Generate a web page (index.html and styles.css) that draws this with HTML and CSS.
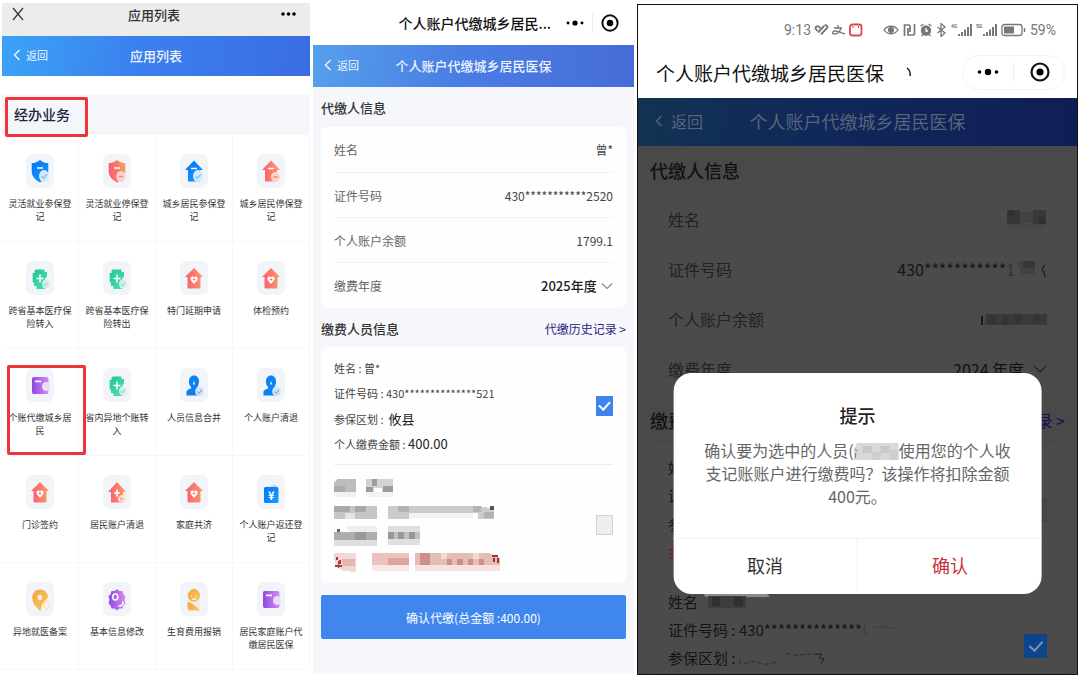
FILE: index.html
```html
<!DOCTYPE html>
<html lang="zh-CN">
<head>
    <meta charset="UTF-8">
    <meta name="viewport" content="width=device-width, initial-scale=1.0">
    <title>个人账户代缴城乡居民医保</title>
    <link rel="stylesheet" href="styles.css">
</head>
<body>

<!-- shared icons -->
<svg class="defs" width="0" height="0" aria-hidden="true">
  <defs>
    <linearGradient id="gBlue" x1="0" y1="0" x2="1" y2="1"><stop offset="0" stop-color="#0a74f5"/><stop offset="1" stop-color="#149bff"/></linearGradient>
    <linearGradient id="gRed" x1="0" y1="0" x2="1" y2="0"><stop offset="0" stop-color="#fa5a72"/><stop offset="1" stop-color="#fd9a66"/></linearGradient>
    <linearGradient id="gGreen" x1="0" y1="0" x2="1" y2="1"><stop offset="0" stop-color="#1fc792"/><stop offset="1" stop-color="#4fe0b0"/></linearGradient>
    <linearGradient id="gPurple" x1="0" y1="0" x2="1" y2="0"><stop offset="0" stop-color="#9048e4"/><stop offset="1" stop-color="#d68cf4"/></linearGradient>
    <linearGradient id="gGold" x1="0" y1="0" x2="1" y2="1"><stop offset="0" stop-color="#f3a83c"/><stop offset="1" stop-color="#f9c468"/></linearGradient>
    <symbol id="badge-ok" viewBox="0 0 28 34"><ellipse cx="18" cy="22" rx="5" ry="6" fill="#d5e9fd"/><path d="M15.500 22l2 2.300 3.300-4" fill="none" stroke="#8cc4fa" stroke-width="1.400"/></symbol>
    <symbol id="shield-ok" viewBox="0 0 28 34"><path d="M14 6c3 2.500 5.500 3 8.300 3v8c0 6-4 9-8.300 11.500C9.700 26 5.700 23 5.700 17V9C8.500 9 11 8.500 14 6z" fill="url(#gBlue)"/><path d="M11 14h6" stroke="#fff" stroke-width="1.600"/><use href="#badge-ok"/></symbol>
    <symbol id="shield-off" viewBox="0 0 28 34"><path d="M14 6c3 2.500 5.500 3 8.300 3v8c0 6-4 9-8.300 11.500C9.700 26 5.700 23 5.700 17V9C8.500 9 11 8.500 14 6z" fill="url(#gRed)"/><path d="M11 14h6" stroke="#fff" stroke-width="1.600"/><ellipse cx="18" cy="22.500" rx="4.600" ry="5.500" fill="#ffd2cb"/><path d="M15.800 22.500h4.400" stroke="#fb8676" stroke-width="1.600"/></symbol>
    <symbol id="house-ok" viewBox="0 0 28 34"><path d="M14 6.500l9 9.500h-3v11.500H8V16H5z" fill="url(#gBlue)"/><path d="M11 14.500h6" stroke="#fff" stroke-width="1.600"/><use href="#badge-ok"/></symbol>
    <symbol id="house-off" viewBox="0 0 28 34"><path d="M14 6.500l9 9.500h-3v11.500H8V16H5z" fill="url(#gRed)"/><path d="M11 14.500h6" stroke="#fff" stroke-width="1.600"/><ellipse cx="18.500" cy="23" rx="4.600" ry="5" fill="#ffd2cb"/><path d="M16.300 23h4.400" stroke="#fb8676" stroke-width="1.400"/></symbol>
    <symbol id="house-heart" viewBox="0 0 28 34"><path d="M14 7l9 9h-2.500v10.500q0 1-1 1h-11q-1 0-1-1V16H5z" fill="url(#gRed)"/><path d="M14 23l-3.500-4.200v-2.300l1.800-1.200L14 16.500l1.700-1.200 1.800 1.200v2.300z" fill="#fff"/><path d="M12.700 18.500h2.600M14 17.200v2.600" stroke="#fb7a6c" stroke-width="1"/></symbol>
    <symbol id="house-plus" viewBox="0 0 28 34"><path d="M14 7l9 10h-3v10.500H8V17H5z" fill="url(#gRed)"/><path d="M11 18h6M14 14.500v7" stroke="#fff" stroke-width="1.700"/><path d="M15 25c0-3 2-5 5-5l3-1-1 7c-1 2-6 2-7-1z" fill="#ffe0d8"/><path d="M19 22l-2 2 2 2M17 24h4" fill="none" stroke="#fb9c88" stroke-width="1"/></symbol>
    <symbol id="cross" viewBox="0 0 28 34"><path d="M10 8.500h8.500v2.500H21v4.500c-2 2-3 4-3 7l1 5.500h-8.500v-3H8v-3.500H6.700V12H8.500V9.500z" fill="url(#gGreen)"/><path d="M10.500 17.500h7M14 13.500v8" stroke="#fff" stroke-width="1.500"/><ellipse cx="19.800" cy="23" rx="3.800" ry="4.500" fill="#d4efe8"/><path d="M17.800 23l1.500 1.800 2.700-3.300" fill="none" stroke="#7ddcbd" stroke-width="1"/></symbol>
    <symbol id="wallet" viewBox="0 0 28 34"><path d="M7.500 9h13q2 0 2 2v4h-2.500a3 3.500 0 0 0 0 7h2.500v2q0 2-2 2h-13q-1.500 0-1.500-2V11q0-2 1.500-2z" fill="url(#gPurple)"/><path d="M9 13.300h6" stroke="#fff" stroke-width="1.700"/><ellipse cx="20" cy="18.500" rx="4" ry="4.500" fill="#eddcf8"/></symbol>
    <symbol id="person" viewBox="0 0 28 34"><path d="M14 7.500c3 0 5 2.500 5 6 0 3-1 5-2.300 6.500-.5 1 0 1.500 1 2.500l2 5H6.500v-3.500c0-2 3-3 4.500-3.500.5-.5.300-1 0-1.500C9.700 17.500 9 16 9 13.500c0-3.500 2-6 5-6z" fill="#0a82f3"/><path d="M14 12.500l-1.200 4h2.400z" fill="#cfe5ff"/><ellipse cx="19.500" cy="23.500" rx="4.300" ry="5" fill="#d5e4f8"/><path d="M17.300 23.500l1.700 2 3-3.600" fill="none" stroke="#6aaaf2" stroke-width="1.100"/></symbol>
    <symbol id="yuan" viewBox="0 0 28 34"><path d="M10 12l8-2.500 2 1V13z" fill="#c4defa"/><rect x="7" y="12" width="14.500" height="16" rx="1.500" fill="url(#gBlue)"/><text x="14.200" y="24.500" font-size="11" font-weight="bold" text-anchor="middle" fill="#fff">¥</text></symbol>
    <symbol id="pin" viewBox="0 0 28 34"><path d="M14 7.500c4.500 0 8 3.500 8 8l-6 7-1.500 6.500C11 26.500 6.200 21 6.200 15.500c0-4.500 3.500-8 7.800-8z" fill="url(#gGold)"/><ellipse cx="13.800" cy="15.500" rx="2.300" ry="2.800" fill="#fdf3e2"/><path d="M20.500 17.500l4.500 5.500-4.500 5.500L16 23z" fill="#fbe6c6"/><path d="M20.500 20.500v5M18.500 23h4" stroke="#fff" stroke-width="1.200"/></symbol>
    <symbol id="gear" viewBox="0 0 28 34"><path d="M14 7l2.500 2h3l1 3.200 2 2-1 3.800 1 3.500-2 2-1 3h-3l-2.500 2-2.500-2h-3l-1-3-2-2 1-3.500-1-3.800 2-2 1-3.200h3z" fill="url(#gPurple)"/><ellipse cx="12.300" cy="15" rx="2.500" ry="3" fill="none" stroke="#fff" stroke-width="1.600"/><path d="M20 19.500q.5 5-4.500 4.500" fill="none" stroke="#fff" stroke-width="1.600"/></symbol>
    <symbol id="baby" viewBox="0 0 28 34"><path d="M14 6.500c3 1 6 3.500 6 7s-2.500 6.500-6 6.500-6.200-3-6.200-6.500 3.200-6 6.200-7z" fill="url(#gGold)"/><path d="M11.500 13.500v1M16 13.500v1M12 16.500q2 1.500 4 0" fill="none" stroke="#fff" stroke-width="1.100"/><path d="M8 19.500l5 2.500 7.500 6.500H8.500c-1.500-3-1.500-6-.5-9z" fill="url(#gGold)"/><path d="M15.500 22.500l4-3.500 1.500 6-1.500 1z" fill="#fbe9cf"/></symbol>
    <symbol id="back" viewBox="0 0 8 12"><path d="M6.500 1L1.500 6l5 5" fill="none" stroke="currentColor" stroke-width="1.400"/></symbol>
    <symbol id="down" viewBox="0 0 12 8"><path d="M1 1.500L6 6.500l5-5" fill="none" stroke="currentColor" stroke-width="1.100"/></symbol>
    <symbol id="dots" viewBox="0 0 22 8"><circle cx="2.500" cy="4" r="1.800"/><circle cx="11" cy="4" r="3.200"/><circle cx="19.500" cy="4" r="1.800"/></symbol>
    <symbol id="target" viewBox="0 0 20 20"><circle cx="10" cy="10" r="8.500" fill="none" stroke="currentColor" stroke-width="2.200"/><circle cx="10" cy="10" r="3.600"/></symbol>
  </defs>
</svg>

<main class="page">

  <!-- application list -->
  <section class="phone apps">
    <div class="topbar">
      <button class="plain" aria-label="关闭"><svg width="12" height="14" viewBox="0 0 12 14"><path d="M1 1l10 12M11 1L1 13" fill="none" stroke="#333" stroke-width="1.200"/></svg></button>
      <h1>应用列表</h1>
      <button class="plain end" aria-label="更多"><svg width="15" height="4" viewBox="0 0 15 4"><circle cx="2" cy="2" r="1.800"/><circle cx="7.500" cy="2" r="1.800"/><circle cx="13" cy="2" r="1.800"/></svg></button>
    </div>
    <div class="navbar">
      <a class="back" href="#"><svg><use href="#back"/></svg>返回</a>
      <h2>应用列表</h2>
    </div>
    <div class="group"><h3 class="marked">经办业务</h3></div>
    <div class="grid">
      <a class="app" href="#"><svg class="tile"><use href="#shield-ok"/></svg><span>灵活就业参保登记</span></a>
      <a class="app" href="#"><svg class="tile"><use href="#shield-off"/></svg><span>灵活就业停保登记</span></a>
      <a class="app" href="#"><svg class="tile"><use href="#house-ok"/></svg><span>城乡居民参保登记</span></a>
      <a class="app" href="#"><svg class="tile"><use href="#house-off"/></svg><span>城乡居民停保登记</span></a>
      <a class="app" href="#"><svg class="tile"><use href="#cross"/></svg><span>跨省基本医疗保险转入</span></a>
      <a class="app" href="#"><svg class="tile"><use href="#cross"/></svg><span>跨省基本医疗保险转出</span></a>
      <a class="app" href="#"><svg class="tile"><use href="#house-heart"/></svg><span>特门延期申请</span></a>
      <a class="app" href="#"><svg class="tile"><use href="#house-heart"/></svg><span>体检预约</span></a>
      <a class="app marked" href="#"><svg class="tile"><use href="#wallet"/></svg><span>个账代缴城乡居民</span></a>
      <a class="app" href="#"><svg class="tile"><use href="#cross"/></svg><span>省内异地个账转入</span></a>
      <a class="app" href="#"><svg class="tile"><use href="#person"/></svg><span>人员信息合并</span></a>
      <a class="app" href="#"><svg class="tile"><use href="#person"/></svg><span>个人账户清退</span></a>
      <a class="app" href="#"><svg class="tile"><use href="#house-heart"/></svg><span>门诊签约</span></a>
      <a class="app" href="#"><svg class="tile"><use href="#house-plus"/></svg><span>居民账户清退</span></a>
      <a class="app" href="#"><svg class="tile"><use href="#house-heart"/></svg><span>家庭共济</span></a>
      <a class="app" href="#"><svg class="tile"><use href="#yuan"/></svg><span>个人账户返还登记</span></a>
      <a class="app" href="#"><svg class="tile"><use href="#pin"/></svg><span>异地就医备案</span></a>
      <a class="app" href="#"><svg class="tile"><use href="#gear"/></svg><span>基本信息修改</span></a>
      <a class="app" href="#"><svg class="tile"><use href="#baby"/></svg><span>生育费用报销</span></a>
      <a class="app" href="#"><svg class="tile"><use href="#wallet"/></svg><span>居民家庭账户代缴居民医保</span></a>
    </div>
  </section>

  <!-- payment form -->
  <section class="phone form">
    <div class="wxbar">
      <h1>个人账户代缴城乡居民...</h1>
      <div class="capsule">
        <button class="plain" aria-label="更多"><svg class="dots"><use href="#dots"/></svg></button>
        <button class="plain" aria-label="关闭"><svg class="target"><use href="#target"/></svg></button>
      </div>
    </div>
    <div class="navbar">
      <a class="back" href="#"><svg><use href="#back"/></svg>返回</a>
      <h2>个人账户代缴城乡居民医保</h2>
    </div>
    <div class="heading"><h3>代缴人信息</h3></div>
    <div class="card info">
      <div class="row"><span>姓名</span><b>曾*</b></div>
      <div class="row"><span>证件号码</span><b>430***********2520</b></div>
      <div class="row"><span>个人账户余额</span><b>1799.1</b></div>
      <div class="row"><label for="year">缴费年度</label>
        <div class="pick"><select id="year"><option>2025年度</option></select><svg><use href="#down"/></svg></div></div>
    </div>
    <div class="heading"><h3>缴费人员信息</h3><a href="#">代缴历史记录 &gt;</a></div>
    <div class="card people">
      <div class="person">
        <label for="p1">
          <span>姓名 : 曾*</span>
          <span>证件号码 : 430**************521</span>
          <span>参保区划 : &nbsp;<b>攸县</b></span>
          <span>个人缴费金额 : <b>400.00</b></span>
        </label>
        <input type="checkbox" id="p1" checked>
      </div>
      <div class="person masked">
        <label for="p2" aria-label="缴费人员">
          <svg width="168" height="94" viewBox="0 0 168 94" shape-rendering="crispEdges">
            <path d="M0 4l4-3h18v13H0z" fill="#bdbdbd"/><path d="M0 8h11v6H0z" fill="#aaa"/><path d="M0 14h22v5H0z" fill="#f1f1f1"/>
            <path d="M32 1h27v13H32z" fill="#d2d2d2"/><path d="M38 1h5v7h-5zM32 9h7v5h-7zM49 8h10v6H49z" fill="#9c9c9c"/><path d="M40 10h8v4h-8z" fill="#fff"/><path d="M32 14h27v5H32z" fill="#f3f3f3"/>
            <path d="M0 28h43v13H0z" fill="#c6c6c6"/><path d="M0 28h16v6H0zM21 28h11v6H21z" fill="#a9a9a9"/><path d="M11 35h10v6H11z" fill="#e4e4e4"/>
            <path d="M54 28h92l14 3v10h-16v-6H75v6H54z" fill="#cbcbcb"/><path d="M64 28h11v6H64zM139 28h8v6h-8zM150 34h10v6h-10z" fill="#b2b2b2"/><path d="M156 28h4v4h-4z" fill="#555"/><path d="M75 35h64v5H75z" fill="#f2f2f2"/>
            <path d="M10 48h33v6H16z" fill="#efefef"/><path d="M0 54h43v8H0z" fill="#adadad"/><path d="M0 62h43v6H0z" fill="#dedede"/><path d="M3 51h3v3H3z" fill="#666"/><path d="M21 54h11v8H21z" fill="#999"/>
            <path d="M54 48h32v19H54z" fill="#dfdfdf"/><path d="M54 54h6v7h-6zM64 54h6v7h-6zM75 54h6v7h-6z" fill="#989898"/><path d="M60 54h4v7h-4zM70 54h5v7h-5zM81 54h5v7h-5z" fill="#c1c1c1"/>
            <path d="M0 75h22v19l-13-1-8-5z" fill="#f2d8d5"/><path d="M8 81h13v7H8z" fill="#e4b7b2"/><path d="M2 79h2v3H2zM5 82h2v4H5zM1 87h7v2H1zM4 83h1v7H4z" fill="#b33a36"/>
            <path d="M38 75h37v12H38z" fill="#ebc2bd"/><path d="M54 80h21v7H54z" fill="#dda39d"/><path d="M38 87h37v6H38z" fill="#f7e7e5"/>
            <path d="M81 75h74l11 5v7H81z" fill="#e6bcb7"/><path d="M81 87h85v6H81z" fill="#f6e3e0"/><path d="M86 75h10v12H86zM113 81h5v6h-5zM123 81h6v6h-6zM134 81h5v6h-5zM145 81h5v6h-5z" fill="#cf8e88"/><path d="M107 75h6v6h-6zM139 75h6v6h-6z" fill="#f1d9d6"/><path d="M158 77h6v2h-6zM159 80h2v4h-2zM163 80h2v5h-2z" fill="#a8302f"/>
          </svg>
        </label>
        <input type="checkbox" id="p2">
      </div>
    </div>
    <button class="submit">确认代缴(总金额 :400.00)</button>
  </section>

  <!-- confirm dialog over the dimmed form -->
  <section class="phone confirm">
    <div class="status">
      <span>9:13</span>
      <svg width="50" height="14" viewBox="0 0 50 14" fill="none" stroke="#777" stroke-width="1.300">
        <path d="M3.500 8L1.500 5.500q0-3 3-2l2 1.500M4 9.500L10 3M7 11.500L13.500 4.500q0-3-3-2" stroke-width="1.900"/>
        <path d="M20 5h8M24 2v3M27 5c-1 4-4 6-7 6-2 0-2-3 1-3 3 0 6 2 10 3"/>
        <rect x="36" y="1.500" width="11.500" height="11" rx="2.500" stroke="#e0464c" stroke-width="1.800"/><path d="M39 3v2M44.500 3v2" stroke="#e0464c" stroke-width="1"/>
      </svg>
      <svg class="signals" width="144" height="14" viewBox="0 0 144 14" fill="none" stroke="#777" stroke-width="1.300">
        <path d="M1 7c3.500-5 10.500-5 14 0-3.500 5-10.500 5-14 0z"/><circle cx="8" cy="7" r="2.400" fill="#777"/>
        <path d="M21.500 13V2h4q1.500 0 1.500 1.500V9M31.500 1v9.500q0 1.500-1.500 1.500h-5V5" stroke-width="1.700"/>
        <circle cx="43" cy="7.500" r="4.500" fill="#777"/><path d="M37.500 3l3-2M48.500 3l-3-2M38.500 13l1.500-1.500M47.500 13l-1.500-1.500"/><path d="M43 5v3h2" stroke="#fff"/>
        <path d="M54.500 4l7.500 6-4 3.500V.5L62 4l-7.500 6"/>
        <text x="68" y="5" font-size="5" font-weight="bold" fill="#777" stroke="none">4G</text>
        <path d="M76 13v-2M79 13V9M82 13V6.500M85 13V4M88 13V1" stroke-width="2"/>
        <text x="93" y="5" font-size="5" font-weight="bold" fill="#777" stroke="none">5G</text>
        <path d="M101 13v-2M104 13V9M107 13V6.500M110 13V4M113 13V1" stroke-width="2"/>
        <rect x="119" y="1.500" width="20" height="11" rx="2.500"/><path d="M121 3.500h10v7h-10z" fill="#777" stroke="none"/><path d="M141.500 5v4" stroke-width="1.500"/>
      </svg>
      <span>59%</span>
    </div>
    <div class="wxbar">
      <h1>个人账户代缴城乡居民医保</h1>
      <svg width="6" height="10" viewBox="0 0 6 10"><path d="M1 1q4 3 3 8" fill="none" stroke="#222" stroke-width="1.500"/></svg>
      <div class="capsule">
        <button class="plain" aria-label="更多"><svg class="dots"><use href="#dots"/></svg></button>
        <button class="plain" aria-label="关闭"><svg class="target"><use href="#target"/></svg></button>
      </div>
    </div>
    <div class="navbar">
      <a class="back" href="#"><svg><use href="#back"/></svg>返回</a>
      <h2>个人账户代缴城乡居民医保</h2>
    </div>
    <div class="heading"><h3>代缴人信息</h3></div>
    <div class="card info">
      <div class="row"><span>姓名</span>
        <svg width="40" height="18" viewBox="0 0 40 18"><path d="M0 0h13v14H0z" fill="#363636"/><path d="M13 2h13v11H13z" fill="#424242"/><path d="M26 0h13v14H26z" fill="#383838"/><path d="M1 0h6v7H1zM32 7h7v7h-7z" fill="#303030"/><path d="M0 14h39v4H0z" fill="#464646"/></svg></div>
      <div class="row"><span>证件号码</span><b>430***********<i>1</i>
        <svg width="32" height="18" viewBox="0 0 32 18"><path d="M2 2h18v12H6z" fill="#424242"/><path d="M8 1h12v7H8z" fill="#383838"/><path d="M30 5q-5 5-1 7l1 5" fill="none" stroke="#222" stroke-width="1.300"/></svg></b></div>
      <div class="row"><span>个人账户余额</span>
        <svg width="67" height="16" viewBox="0 0 67 16"><path d="M5 3h62v11H5z" fill="#3a3a3a"/><path d="M8 4h7v10H8zM22 5h6v9h-6zM35 3h6v10h-6zM54 4h6v8h-6z" fill="#343434"/><path d="M2 5v9" stroke="#111" stroke-width="1.800"/></svg></div>
      <div class="row"><label for="year2">缴费年度</label>
        <div class="pick"><select id="year2"><option>2024 年度</option></select><svg><use href="#down"/></svg></div></div>
    </div>
    <div class="heading"><h3>缴费人员信息</h3><a href="#">代缴历史记录 &gt;</a></div>
    <div class="card people">
      <div class="person">
        <label for="p3"><span>姓名 :</span><span>证件号码 :</span><span>参保区划 :</span><span class="due">金额 :</span></label>
        <input type="checkbox" id="p3">
      </div>
      <div class="person">
        <label for="p4">
          <span>姓名
            <svg width="78" height="28" viewBox="0 0 78 28"><path d="M1 2h56q10 1 15 7H8z" fill="#8b8b8b"/><path d="M10 8h38v12H10z" fill="#3d3d3d"/><path d="M14 9h8v9h-8zM36 9h9v9h-9z" fill="#303030"/></svg></span>
          <span>证件号码 : 430**************
            <svg width="34" height="14" viewBox="0 0 34 14"><path d="M4 1q-5 7 2 11M12 5q8-3 20 1" fill="none" stroke="#3a3a3a"/></svg></span>
          <span>参保区划 :
            <svg width="92" height="16" viewBox="0 0 92 16" fill="none" stroke="#2f2f2f"><path d="M4 9v5M8 14q8-4 16-1t18-2M50 3q8 3 14 2t12-1" stroke-dasharray="5 2"/><path d="M78 4h8l-3 4 5 1-3 5" stroke="#1e1e1e"/></svg></span>
        </label>
        <input type="checkbox" id="p4" checked>
      </div>
    </div>

    <div class="dialog" role="dialog" aria-labelledby="tip">
      <h2 id="tip">提示</h2>
      <p>确认要为选中的人员(<svg width="45" height="19" viewBox="0 0 45 19"><path d="M3 0h42v17H0V8z" fill="#d9d9d9"/><path d="M9 3h9v7H9zM27 3h9v7h-9z" fill="#c9c9c9"/><path d="M18 9h9v8h-9zM36 7h9v10h-9z" fill="#cfcfcf"/><path d="M1 6l3 2M2 10v5" stroke="#777"/></svg>使用您的个人收支记账账户进行缴费吗？该操作将扣除金额400元。</p>
      <div class="actions">
        <button>取消</button>
        <button class="ok">确认</button>
      </div>
    </div>
  </section>

</main>

</body>
</html>
```
FILE: styles.css
```css
* {
  margin: 0;
  padding: 0;
  box-sizing: border-box;
}
body {
  background: #fff;
  color: #333;
  font-family: "Noto Sans CJK SC", sans-serif;
}
a {
  color: inherit;
  text-decoration: none;
}
b, i {
  font-weight: normal;
  font-style: normal;
}
button, select {
  font: inherit;
  color: inherit;
  border: 0;
  background: none;
}
svg {
  flex: none;
}
.defs {
  position: absolute;
}
.plain {
  display: flex;
  cursor: pointer;
}

.page {
  display: grid;
  grid-template-columns: 308fr 321fr 441fr;
  grid-template-rows: minmax(0, 1fr);
  gap: 3px;
  height: 100vh;
  padding: 0 2px 2px;
}
.phone {
  position: relative;
  overflow: hidden;
}

/* blue title bar */
.navbar {
  display: grid;
  grid-template-columns: 1fr auto 1fr;
  align-items: center;
  height: 42px;
  padding: 0 11px 2px;
  color: #eef4ff;
  background: linear-gradient(100deg, #55a0ec, #4a7ee4 45%, #466cd8);
}
.navbar h2 {
  font-size: 13px;
  font-weight: 500;
}
.back {
  display: flex;
  align-items: center;
  gap: 5px;
  font-size: 11px;
}
.back svg {
  width: 8px;
  height: 14px;
}

/* application list */
.apps {
  padding-top: 3px;
}
.topbar {
  display: grid;
  grid-template-columns: 1fr auto 1fr;
  align-items: center;
  height: 33px;
  padding: 0 14px 11px 10px;
  background: #ececec;
}
.topbar h1 {
  font-size: 13px;
  font-weight: 500;
}
.end {
  justify-self: end;
}
.apps .navbar {
  height: 40px;
  background: linear-gradient(100deg, #3ba3f7, #3b7fee 45%, #3a6de2);
}
.group {
  height: 40px;
  margin-top: 19px;
  padding-left: 12px;
  background: #f5f6fa;
}
.group h3 {
  position: relative;
  display: inline-block;
  line-height: 38px;
  font-size: 14px;
  font-weight: 500;
  color: #1c2440;
}
.marked {
  position: relative;
}
.marked::after {
  content: "";
  position: absolute;
  inset: 16px -8px 0 5px;
  border: 3px solid #ee333b;
  border-radius: 2px;
}
.group .marked::after {
  inset: 2px -18px -4px -9px;
}
.grid {
  display: grid;
  grid-template-columns: repeat(4, 1fr);
  grid-auto-rows: 107px;
}
.app {
  display: flex;
  flex-direction: column;
  align-items: center;
  gap: 9px;
  padding: 19px 6px 0;
  border-right: 1px solid #f6f7f9;
  border-bottom: 1px solid #f6f7f9;
  font-size: 9px;
  line-height: 13px;
  text-align: center;
}
.tile {
  width: 28px;
  height: 34px;
  border-radius: 7px;
  background: #f1f4f8;
}
.app.marked {
  z-index: 1;
}

/* payment form */
.form {
  margin-bottom: 1px;
  background: #f6f7fa;
}
.wxbar {
  display: flex;
  align-items: center;
  height: 45px;
  background: #fff;
  color: #111;
}
.wxbar h1 {
  font-size: 14px;
  font-weight: 500;
}
.form .wxbar h1 {
  margin-left: auto;
}
.capsule {
  display: flex;
  align-items: center;
}
.form .capsule {
  margin: 0 15px 0 15px;
}
.capsule button + button {
  margin-left: 8px;
  padding-left: 8px;
  border-left: 1px solid #ececec;
}
.dots {
  width: 18px;
  height: 8px;
}
.target {
  width: 18px;
  height: 20px;
}
.heading {
  display: flex;
  align-items: center;
  justify-content: space-between;
  height: 40px;
  padding: 0 8px;
  font-size: 12px;
}
.heading h3 {
  font-size: 13px;
  font-weight: 500;
}
.heading a {
  color: #2f2387;
}
.card {
  margin: 0 8px;
  padding: 0 13px;
  border-radius: 5px;
  background: #fefefe;
}
.form .people {
  margin-top: -1px;
}
.row {
  display: flex;
  align-items: center;
  justify-content: space-between;
  height: 45px;
  border-bottom: 1px solid #f2f2f3;
  font-size: 12px;
  color: #666;
}
.form .row:first-child {
  height: 46px;
}
.row:last-child {
  border-bottom: 0;
}
.row b {
  color: #444;
}
.pick {
  display: flex;
  align-items: center;
  gap: 4px;
}
.pick svg {
  width: 12px;
  height: 8px;
  color: #888;
}
.pick select {
  appearance: none;
  font-size: 13px;
  font-weight: 500;
  color: #222;
}
.person {
  display: flex;
  align-items: center;
  justify-content: space-between;
  padding: 9px 0 8px;
  border-bottom: 1px solid #eee;
}
.person:last-child {
  border-bottom: 0;
}
.person label {
  display: flex;
  flex-direction: column;
  font-size: 11px;
  line-height: 25px;
  color: #444;
}
.person b {
  font-size: 13px;
  color: #222;
}
.person span {
  height: 25px;
  white-space: nowrap;
}
.form .masked {
  padding: 13px 0 11px;
}
input[type="checkbox"] {
  appearance: none;
  display: grid;
  place-items: center;
  width: 17px;
  height: 20px;
  border: 1px solid #d2d2d2;
  background: #eee;
}
input[type="checkbox"]:checked {
  border-color: #3d84ee;
  background: #3d84ee;
}
input[type="checkbox"]:checked::after {
  content: "";
  width: 5px;
  height: 9px;
  margin-bottom: 3px;
  border: solid #fff;
  border-width: 0 2px 2px 0;
  transform: rotate(42deg);
}
.submit {
  display: block;
  width: calc(100% - 16px);
  height: 44px;
  margin: 12px 8px 0;
  border-radius: 2px;
  background: #3f86ee;
  color: #fff;
  font-size: 12px;
}

/* confirm screen */
.confirm {
  margin-top: 4px;
  border: 1px solid #111;
  background: #494949;
}
.status {
  display: flex;
  align-items: center;
  gap: 3px;
  height: 50px;
  padding-right: 21px;
  justify-content: flex-end;
  background: #fff;
  color: #777;
  font-family: Roboto, sans-serif;
  font-size: 14px;
}
.signals {
  margin-left: 16px;
}
.confirm .wxbar {
  height: 43px;
  padding: 0 12px 9px 18px;
}
.confirm .wxbar h1 {
  margin-right: 22px;
  font-size: 19px;
  font-weight: 400;
}
.confirm .capsule {
  height: 35px;
  margin-left: auto;
  padding: 0 14px;
  border: 1px solid #f3f3f3;
  border-radius: 18px;
}
.confirm .capsule button + button {
  margin-left: 14px;
  padding-left: 16px;
}
.confirm .dots {
  width: 22px;
}
.confirm .target {
  width: 20px;
}
.confirm .navbar {
  height: 48px;
  padding: 0 17px 2px;
  background: linear-gradient(100deg, #123352, #10275a 45%, #101e56);
  color: #596379;
}
.confirm .navbar h2 {
  font-size: 18px;
  font-weight: 400;
}
.confirm .back {
  gap: 8px;
  font-size: 16px;
}
.confirm .heading {
  height: 48px;
  padding: 0 12px;
  font-size: 16px;
  color: #111;
}
.confirm .heading h3 {
  font-size: 18px;
}
.confirm .heading a {
  color: #15104e;
}
.confirm .card {
  margin: 0 12px;
  padding: 0 18px;
  background: #4b4b4b;
}
.confirm .info {
  margin-bottom: 2px;
}
.confirm .row {
  height: 50px;
  border-color: #464646;
  font-size: 16px;
  color: #222;
}
.confirm .row b {
  display: flex;
  align-items: center;
  color: #151515;
}
.confirm .row i {
  color: #333;
}
.confirm .pick select {
  font-size: 16px;
  font-weight: 400;
  color: #111;
}
.confirm .pick {
  gap: 8px;
}
.confirm .pick svg {
  width: 14px;
  height: 10px;
  color: #222;
}
.confirm .people {
  padding-top: 10px;
}
.confirm .person {
  padding: 0 0 22px;
  border: 0;
}
.confirm .person:last-child {
  align-items: flex-end;
}
.confirm .person label {
  font-size: 15px;
  line-height: 28px;
  color: #151515;
}
.confirm .person span {
  display: flex;
  align-items: center;
  height: 28px;
}
.confirm .person .due {
  color: #8c1024;
}
.confirm input[type="checkbox"] {
  width: 23px;
  height: 24px;
  border-color: #424242;
  background: #454545;
}
.confirm input[type="checkbox"]:checked {
  margin-bottom: 14px;
  border-color: #0c458c;
  background: #0c458c;
}
.confirm input[type="checkbox"]:checked::after {
  border-color: #7f93ad;
  width: 6px;
  height: 11px;
}
.dialog {
  position: absolute;
  top: 368px;
  left: 50%;
  width: 84%;
  transform: translateX(-50%);
  border-radius: 18px;
  background: #fff;
  text-align: center;
}
.dialog h2 {
  padding-top: 28px;
  font-size: 18px;
  font-weight: 500;
  line-height: 28px;
  color: #222;
}
.dialog p {
  width: 310px;
  margin: 10px auto 30px;
  font-size: 16px;
  line-height: 23px;
  color: #666;
}
.dialog p svg {
  vertical-align: middle;
}
.actions {
  display: flex;
  border-top: 1px solid #f3f3f3;
}
.actions button {
  flex: 1;
  height: 55px;
  padding-bottom: 4px;
  font-size: 18px;
}
.actions .ok {
  border-left: 1px solid #f3f3f3;
  color: #c8323e;
}
```
